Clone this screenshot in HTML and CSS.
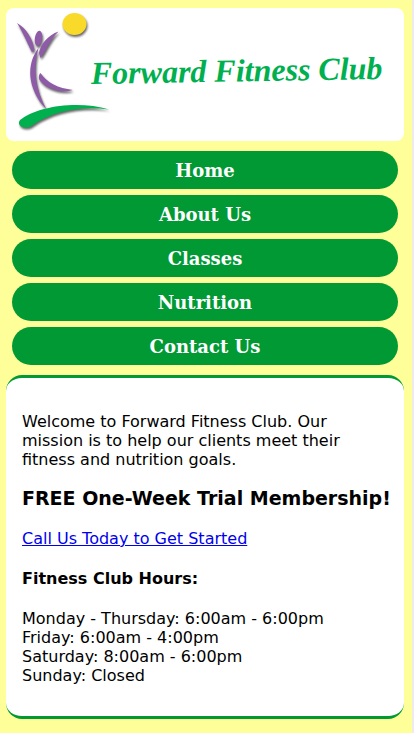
FILE: index.html
```html
<!DOCTYPE html>
<html lang="en">
<head>
<meta charset="utf-8">
<meta name="viewport" content="width=device-width, initial-scale=1">
<title>Forward Fitness Club</title>
<link rel="stylesheet" href="styles.css">
</head>
<body>
<header class="banner">
  <svg class="logo" viewBox="0 0 398 133" role="img" aria-label="Forward Fitness Club">
    <g class="shadowed">
      <ellipse cx="68.500" cy="16" rx="12" ry="11" fill="#f9da2b"/>
      <g fill="#8e5ba6">
        <ellipse cx="32.500" cy="30.500" rx="3.700" ry="7.700" transform="rotate(8 32.500 30.500)"/>
        <path d="M11 15C20 20 27 31 28.500 42L26 44C22 37 18 26 11 15Z"/>
        <path d="M52.500 23.500C42 27 34 37 33 45L34.500 50C40 44 43 33 52.500 23.500Z"/>
        <path d="M32.500 40C20 56 21 81 40.500 101.500C29 80 27 60 32.500 40Z"/>
        <path d="M34.500 65C41 75 52 80 67 82C53 86 37 79 33 71C32.500 69 33 66 34.500 65Z"/>
      </g>
      <path d="M14 112C31 98 73 92 103 101.500C76 98 49 102 27 117C21 122 12 119 13 114Z" fill="#00b04f"/>
    </g>
    <text class="name" x="85" y="76" transform="rotate(-1 85 76)">Forward Fitness Club</text>
  </svg>
</header>
<nav class="menu" aria-label="Main">
  <a href="#home">Home</a>
  <a href="#about">About Us</a>
  <a href="#classes">Classes</a>
  <a href="#nutrition">Nutrition</a>
  <a href="#contact">Contact Us</a>
</nav>
<main class="panel">
  <p>Welcome to Forward Fitness Club. Our mission is to help our clients meet their fitness and nutrition goals.</p>
  <h1>FREE One-Week Trial Membership!</h1>
  <p><a href="#call">Call Us Today to Get Started</a></p>
  <h2>Fitness Club Hours:</h2>
  <p>Monday - Thursday: 6:00am - 6:00pm<br>Friday: 6:00am - 4:00pm<br>Saturday: 8:00am - 6:00pm<br>Sunday: Closed</p>
</main>
</body>
</html>
```
FILE: styles.css
```css
* {
  box-sizing: border-box;
}

body {
  min-height: 100vh;
  margin: 0;
  padding: 8px 8px 14px 6px;
  border-right: 2px solid #eeeaee;
  background: #ffff99;
  color: #000;
  font-family: Verdana, "DejaVu Sans", sans-serif;
  font-size: 16px;
  line-height: 19px;
}

.banner {
  border-radius: 8px;
  background: #fff;
}

.logo {
  display: block;
  width: 100%;
}

.shadowed {
  filter: drop-shadow(1px 2px 1px rgba(0, 0, 0, 0.6));
}

.name {
  fill: #00b04f;
  font-family: "Brush Script MT", "Liberation Serif", serif;
  font-size: 32px;
  font-style: italic;
  font-weight: bold;
}

.menu {
  display: flex;
  flex-direction: column;
  gap: 6px;
  padding: 10px 6px;
}

.menu a {
  padding: 9px 8px 7px;
  border-radius: 19px;
  background: #009933;
  color: #fff;
  font-family: Georgia, "DejaVu Serif", serif;
  font-size: 18px;
  font-weight: bold;
  line-height: 22px;
  text-align: center;
  text-decoration: none;
}

.panel {
  padding: 34px 16px 31px;
  border-top: 3px solid #009933;
  border-bottom: 3px solid #009933;
  border-radius: 16px;
  background: #fff;
}

.panel p {
  margin: 0;
}

.panel h1,
.panel h2 {
  line-height: 20px;
}

.panel h1 {
  margin: 19px 0 21px;
  font-size: 19px;
  white-space: nowrap;
}

.panel h2 {
  margin: 21px 0 20px;
  font-size: 16px;
}

.panel a {
  color: #0000ee;
}
```
